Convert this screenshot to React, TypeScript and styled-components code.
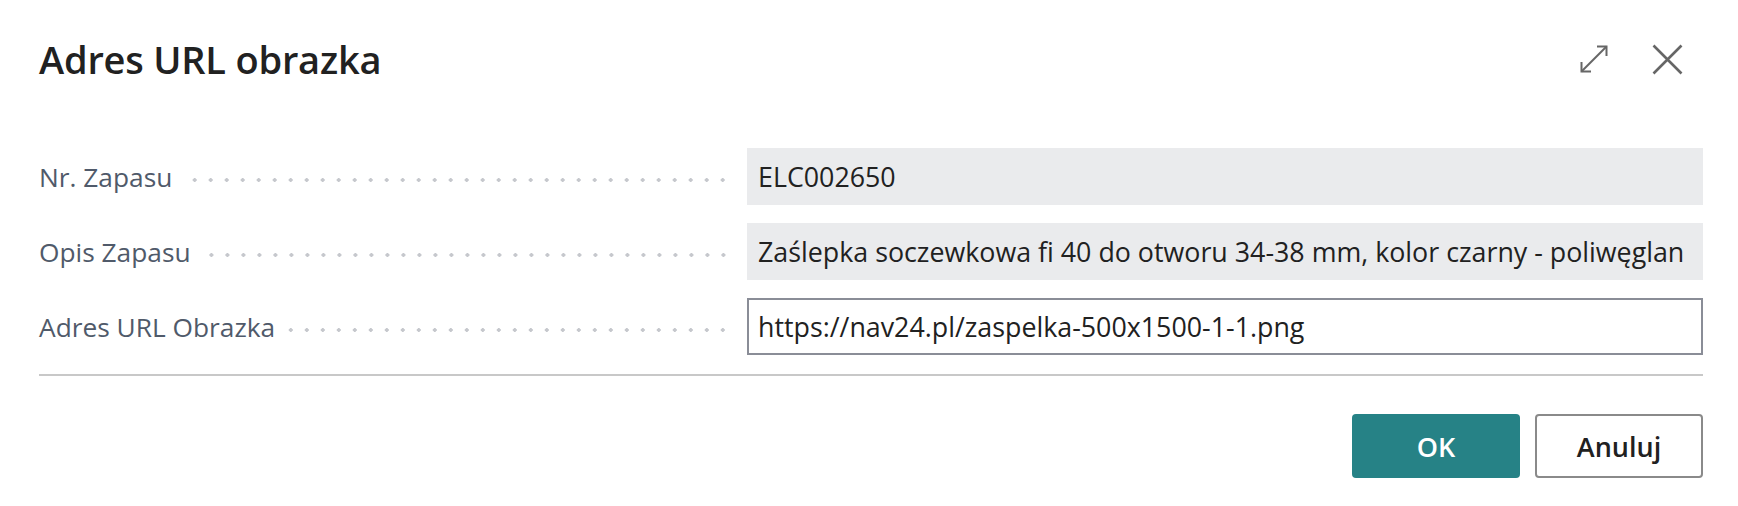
import styled, { createGlobalStyle } from "styled-components";

const GlobalStyle = createGlobalStyle`
  body {
    margin: 0;
    background: #ffffff;
    font-family: "Open Sans", "Noto Sans", Arial, sans-serif;
  }
`;

const Dialog = styled.div`
  width: 1738px;
  height: 506px;
  box-sizing: border-box;
  padding: 0 35px 0 39px;
  display: flex;
  flex-direction: column;
  background: #ffffff;
`;

const Header = styled.header`
  height: 118px;
  display: flex;
  justify-content: space-between;
  align-items: center;
`;

const Title = styled.h1`
  margin: 0;
  font-size: 38px;
  font-weight: 600;
  color: #212121;
  letter-spacing: -0.2px;
`;

const Actions = styled.div`
  display: flex;
  align-items: center;
  gap: 44px;
  padding-right: 20px;
`;

const IconButton = styled.button`
  padding: 0;
  border: none;
  background: none;
  display: flex;
  color: #666666;
  cursor: pointer;
`;

const Form = styled.div`
  margin-top: 30px;
  display: grid;
  row-gap: 18px;
`;

const Row = styled.div`
  display: grid;
  grid-template-columns: 1fr 956px;
  column-gap: 12px;
  align-items: center;
`;

const Label = styled.div`
  display: flex;
  align-items: center;
  font-size: 26.3px;
  color: #505a6a;
  white-space: nowrap;
`;

const Leader = styled.span`
  flex: 1;
  height: 4px;
  margin: 6px 4px 0 10px;
  background-image: radial-gradient(circle, #c6c8cd 1.6px, transparent 1.9px);
  background-size: 16px 4px;
  background-repeat: repeat-x;
  background-position: right center;
`;

const Field = styled.div<{ $editable?: boolean }>`
  box-sizing: border-box;
  height: 57px;
  display: flex;
  align-items: center;
  padding-left: ${(p) => (p.$editable ? "9px" : "11px")};
  font-size: 26.8px;
  color: #212121;
  white-space: nowrap;
  overflow: hidden;
  background: ${(p) => (p.$editable ? "#ffffff" : "#eaebed")};
  border: ${(p) => (p.$editable ? "2px solid #8a8d97" : "none")};
`;

const Divider = styled.hr`
  margin: 19px 0 0;
  border: none;
  height: 2px;
  background: #c8c8c8;
`;

const Footer = styled.div`
  margin-top: 38px;
  display: flex;
  justify-content: flex-end;
  gap: 15px;
`;

const Button = styled.button<{ $primary?: boolean }>`
  width: 168px;
  height: 64px;
  box-sizing: border-box;
  border-radius: 4px;
  font-family: inherit;
  font-size: 27px;
  font-weight: 600;
  cursor: pointer;
  color: ${(p) => (p.$primary ? "#ffffff" : "#212121")};
  background: ${(p) => (p.$primary ? "#268286" : "#ffffff")};
  border: ${(p) => (p.$primary ? "none" : "2px solid #8a8a8a")};
`;

const ExpandIcon = () => (
  <svg width="28" height="28" viewBox="0 0 28 28" fill="none" stroke="currentColor" strokeWidth="2">
    <path d="M1.5 26.5 L26.5 1.5" />
    <path d="M17 1.5 H26.5 V11" />
    <path d="M1.5 17 V26.5 H11" />
  </svg>
);

const CloseIcon = () => (
  <svg width="31" height="31" viewBox="0 0 31 31" fill="none" stroke="currentColor" strokeWidth="2.6">
    <path d="M1.5 1.5 L29.5 29.5 M29.5 1.5 L1.5 29.5" />
  </svg>
);

const fields = [
  { label: "Nr. Zapasu", value: "ELC002650" },
  {
    label: "Opis Zapasu",
    value: "Zaślepka soczewkowa fi 40 do otworu 34-38 mm, kolor czarny - poliwęglan",
  },
  { label: "Adres URL Obrazka", value: "https://nav24.pl/zaspelka-500x1500-1-1.png", editable: true },
];

export default function App() {
  return (
    <>
      <GlobalStyle />
      <Dialog>
        <Header>
          <Title>Adres URL obrazka</Title>
          <Actions>
            <IconButton aria-label="Maksymalizuj">
              <ExpandIcon />
            </IconButton>
            <IconButton aria-label="Zamknij">
              <CloseIcon />
            </IconButton>
          </Actions>
        </Header>
        <Form>
          {fields.map((f) => (
            <Row key={f.label}>
              <Label>
                {f.label}
                <Leader />
              </Label>
              <Field $editable={f.editable}>{f.value}</Field>
            </Row>
          ))}
        </Form>
        <Divider />
        <Footer>
          <Button $primary>OK</Button>
          <Button>Anuluj</Button>
        </Footer>
      </Dialog>
    </>
  );
}
